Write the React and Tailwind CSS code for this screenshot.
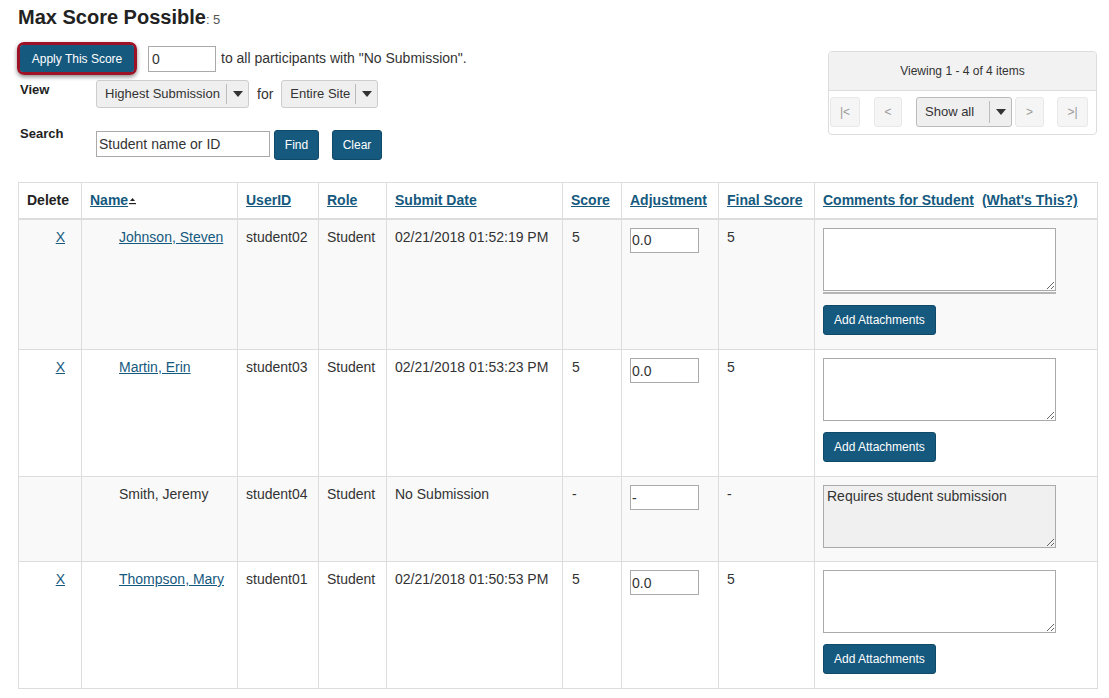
import React from "react";

const LINK = "text-[#15597e] underline";
const BTN = "bg-[#15597e] text-white text-[12px] rounded-[3px] border border-[#0f4a6a]";

function Caret() {
  return (
    <svg width="10" height="6" viewBox="0 0 10 6" className="block">
      <path d="M0 0 L10 0 L5 6 Z" fill="#333" />
    </svg>
  );
}

function Select({ label, width }) {
  return (
    <div className={`flex items-center h-[28px] ${width} bg-[#efefef] border border-[#cccccc] rounded-[3px] text-[13px] text-[#333]`}>
      <span className="flex-1 pl-[8px] whitespace-nowrap">{label}</span>
      <span className="h-[20px] border-l border-[#bbb]" />
      <span className="w-[21px] flex justify-center"><Caret /></span>
    </div>
  );
}

function SortIcon() {
  return (
    <svg width="7" height="8" viewBox="0 0 7 8" className="inline-block ml-[1px] align-baseline">
      <path d="M1 4 L6 4 L3.5 1 Z" fill="#222" />
      <rect x="0" y="6" width="7" height="1.2" fill="#222" />
    </svg>
  );
}

function CommentCell({ disabled, text, doubleLine }) {
  return (
    <div>
      {doubleLine ? (
        <div className="w-[233px] border-b-[2px] border-[#b5b5b5] pb-[1px]">
          <textarea
            readOnly
            className="block w-[233px] h-[63px] border border-[#aaa] bg-white resize-y outline-none"
          />
        </div>
      ) : (
        <textarea
          readOnly
          value={text || ""}
          className={`block w-[233px] h-[63px] border border-[#aaa] resize-y outline-none px-[3px] py-[1px] text-[14px] text-[#333] leading-[18px] ${disabled ? "bg-[#f0f0f0]" : "bg-white"}`}
        />
      )}
      {!disabled && (
        <button className={`${BTN} mt-[11px] h-[30px] px-[10px]`}>Add Attachments</button>
      )}
    </div>
  );
}

const rows = [
  { del: true, name: "Johnson, Steven", link: true, id: "student02", date: "02/21/2018 01:52:19 PM", score: "5", adj: "0.0", fin: "5", h: "h-[131px]", bg: "bg-[#f9f9f9]", dbl: true },
  { del: true, name: "Martin, Erin", link: true, id: "student03", date: "02/21/2018 01:53:23 PM", score: "5", adj: "0.0", fin: "5", h: "h-[127px]", bg: "bg-white" },
  { del: false, name: "Smith, Jeremy", link: false, id: "student04", date: "No Submission", score: "-", adj: "-", fin: "-", h: "h-[85px]", bg: "bg-[#f9f9f9]", disabled: true },
  { del: true, name: "Thompson, Mary", link: true, id: "student01", date: "02/21/2018 01:50:53 PM", score: "5", adj: "0.0", fin: "5", h: "h-[127px]", bg: "bg-white" },
];

export default function App() {
  const td = "border border-[#dddddd] align-top pt-[7px] pl-[8px] pr-[4px] leading-[20px]";
  const th = "border border-[#dddddd] border-b-[2px] text-left font-bold pl-[8px] pr-[4px] h-[36px] leading-[20px] whitespace-nowrap";
  return (
    <div
      className="min-h-[698px] bg-white pl-[18px] pr-[12px] text-[14px] text-[#333]"
      style={{ fontFamily: '"Liberation Sans", Arial, sans-serif' }}
    >
      <div className="flex justify-between items-start">
        <div>
          <div className="pt-[4px] leading-[26px] whitespace-nowrap">
            <span className="text-[20px] font-bold text-[#222]">Max Score Possible</span>
            <span className="text-[13px] text-[#555]">: 5</span>
          </div>
          <div className="mt-[9px] flex items-center h-[33px]">
            <div className="ml-[-1px] border-[3px] border-[#9e1226] rounded-[7px] shadow-[0_2px_4px_rgba(0,0,0,0.45)]">
              <button className={`${BTN} block h-[27px] w-[114px] border-0`}>Apply This Score</button>
            </div>
            <input
              readOnly
              value="0"
              className="ml-[11px] w-[68px] h-[26px] border border-[#aaa] px-[3px] text-[14px] text-[#333] outline-none"
            />
            <span className="ml-[5px] whitespace-nowrap">to all participants with "No Submission".</span>
          </div>
          <div className="mt-[5px] flex items-start">
            <span className="w-[78px] pl-[2px] font-bold text-[13px] leading-[20px] text-[#222]">View</span>
            <Select label="Highest Submission" width="w-[153px]" />
            <span className="mx-[8px] leading-[28px]">for</span>
            <Select label="Entire Site" width="w-[97px]" />
          </div>
          <div className="mt-[16px] flex items-start">
            <span className="w-[78px] pl-[2px] font-bold text-[13px] leading-[20px] text-[#222]">Search</span>
            <input
              readOnly
              value="Student name or ID"
              className="mt-[7px] w-[174px] h-[26px] border border-[#aaa] px-[2px] text-[14px] text-[#333] outline-none"
            />
            <button className={`${BTN} mt-[6px] ml-[4px] h-[30px] w-[45px]`}>Find</button>
            <button className={`${BTN} mt-[6px] ml-[13px] h-[30px] w-[50px]`}>Clear</button>
          </div>
        </div>
        <div className="mt-[51px] w-[269px] border border-[#dddddd] rounded-[4px] overflow-hidden">
          <div className="h-[39px] bg-[#f2f2f2] border-b border-[#dddddd] flex items-center justify-center text-[12px] text-[#333]">
            Viewing 1 - 4 of 4 items
          </div>
          <div className="h-[43px] flex items-start pt-[6px] pl-[1px] text-[12px] text-[#999]">
            <span className="w-[30px] h-[30px] flex items-center justify-center bg-[#f5f5f5] border border-[#e8e8e8] rounded-[3px]">|&lt;</span>
            <span className="ml-[14px] w-[28px] h-[30px] flex items-center justify-center bg-[#f5f5f5] border border-[#e8e8e8] rounded-[3px]">&lt;</span>
            <div className="ml-[14px] w-[96px] h-[30px] flex items-center bg-[#efefef] border border-[#bbb] rounded-[3px] text-[13px] text-[#333]">
              <span className="flex-1 pl-[8px]">Show all</span>
              <span className="h-[22px] border-l border-[#bbb]" />
              <span className="w-[21px] flex justify-center"><Caret /></span>
            </div>
            <span className="ml-[3px] w-[29px] h-[30px] flex items-center justify-center bg-[#f5f5f5] border border-[#e8e8e8] rounded-[3px]">&gt;</span>
            <span className="ml-[13px] w-[31px] h-[30px] flex items-center justify-center bg-[#f5f5f5] border border-[#e8e8e8] rounded-[3px]">&gt;|</span>
          </div>
        </div>
      </div>

      <table className="mt-[22px] w-[1079px] table-fixed border-collapse border border-[#dddddd]">
        <colgroup>
          <col className="w-[63px]" />
          <col className="w-[156px]" />
          <col className="w-[81px]" />
          <col className="w-[68px]" />
          <col className="w-[176px]" />
          <col className="w-[59px]" />
          <col className="w-[97px]" />
          <col className="w-[96px]" />
          <col className="w-[283px]" />
        </colgroup>
        <thead>
          <tr className="bg-white">
            <th className={`${th} text-center pl-[4px] text-[#222]`}>Delete</th>
            <th className={th}><span className={LINK}>Name</span><SortIcon /></th>
            <th className={th}><span className={LINK}>UserID</span></th>
            <th className={th}><span className={LINK}>Role</span></th>
            <th className={th}><span className={LINK}>Submit Date</span></th>
            <th className={th}><span className={LINK}>Score</span></th>
            <th className={th}><span className={LINK}>Adjustment</span></th>
            <th className={th}><span className={LINK}>Final Score</span></th>
            <th className={th}>
              <span className={LINK}>Comments for Student</span>
              <span className={`${LINK} ml-[8px]`}>(What's This?)</span>
            </th>
          </tr>
        </thead>
        <tbody>
          {rows.map((r) => (
            <tr key={r.id} className={`${r.h} ${r.bg}`}>
              <td className={`${td} text-right pr-[16px]`}>
                {r.del && <span className={LINK}>X</span>}
              </td>
              <td className={`${td} pl-[37px] whitespace-nowrap`}>
                {r.link ? <span className={LINK}>{r.name}</span> : r.name}
              </td>
              <td className={td}>{r.id}</td>
              <td className={td}>Student</td>
              <td className={`${td} whitespace-nowrap`}>{r.date}</td>
              <td className={`${td} pl-[9px]`}>{r.score}</td>
              <td className={`${td} pt-[8px]`}>
                <input
                  readOnly
                  value={r.adj}
                  className="w-[69px] h-[25px] border border-[#aaa] bg-white px-[1px] text-[14px] text-[#333] outline-none"
                />
              </td>
              <td className={td}>{r.fin}</td>
              <td className={`${td} pt-[8px]`}>
                <CommentCell
                  disabled={r.disabled}
                  text={r.disabled ? "Requires student submission" : ""}
                  doubleLine={r.dbl}
                />
              </td>
            </tr>
          ))}
        </tbody>
      </table>
    </div>
  );
}
